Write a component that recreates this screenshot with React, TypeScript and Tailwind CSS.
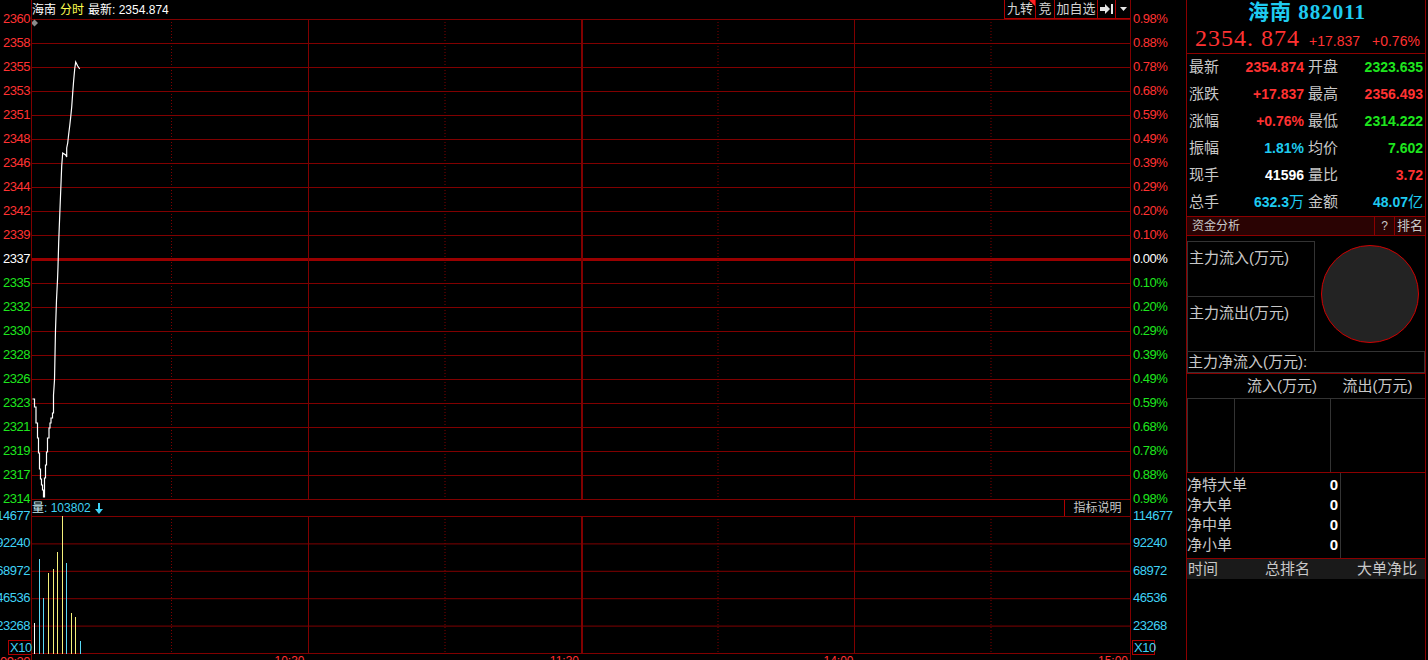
import React from "react";

const GRID = "#800000";

const upRows = [
  ["2360", "0.98%"],
  ["2358", "0.88%"],
  ["2355", "0.78%"],
  ["2353", "0.68%"],
  ["2351", "0.59%"],
  ["2348", "0.49%"],
  ["2346", "0.39%"],
  ["2344", "0.29%"],
  ["2342", "0.20%"],
  ["2339", "0.10%"],
];
const downRows = [
  ["2335", "0.10%"],
  ["2332", "0.20%"],
  ["2330", "0.29%"],
  ["2328", "0.39%"],
  ["2326", "0.49%"],
  ["2323", "0.59%"],
  ["2321", "0.68%"],
  ["2319", "0.78%"],
  ["2317", "0.88%"],
  ["2314", "0.98%"],
];

interface AxisRow {
  price: string;
  pct: string;
  tone: string;
}

const axisRows: AxisRow[] = [
  ...upRows.map(([price, pct]) => ({ price, pct, tone: "text-[#ff3232]" })),
  { price: "2337", pct: "0.00%", tone: "text-white" },
  ...downRows.map(([price, pct]) => ({ price, pct, tone: "text-[#1ee61e]" })),
];

const volLabels = ["114677", "92240", "68972", "46536", "23268"];

// global pixel coords of the minute line, shifted into the chart svg below
const pricePts: [number, number][] = [
  [32.5, 399], [34.5, 399], [34.5, 407], [36, 407], [36, 423], [37.5, 423],
  [37.5, 438], [38.5, 438], [38.5, 453], [39.5, 453], [39.5, 469], [40.5, 469],
  [40.5, 479], [41.5, 479], [41.5, 485], [42.5, 485], [42.5, 490], [43.5, 490],
  [43.5, 497], [44.5, 497], [44.5, 478], [45.5, 478], [45.5, 465], [46.5, 465],
  [46.5, 452], [47.5, 452], [47.5, 438], [49, 438], [49, 428], [50, 428],
  [50, 423], [51, 423], [51, 418], [52.5, 418], [52.5, 413], [53.5, 413],
  [53.5, 395], [54.5, 380], [55.5, 330], [56.5, 300], [57.5, 280], [58, 267],
  [58.7, 242], [59.7, 216], [60.7, 191], [61.7, 166], [62.7, 153], [65.7, 155],
  [66.7, 157], [66.7, 148], [67.7, 143], [68.7, 134], [69.7, 126], [70.7, 117],
  [71.7, 107], [72.7, 93], [73.7, 80], [74.7, 69], [75.7, 62], [76.7, 64],
  [77.7, 66], [79.7, 69],
];

const volBars: [number, number, string][] = [
  [2.5, 107, "#ffffff"],
  [7.5, 43, "#5ad8f5"],
  [11.5, 82, "#5ad8f5"],
  [16.5, 57, "#f4f07a"],
  [21.5, 53, "#f4f07a"],
  [25.5, 36, "#f4f07a"],
  [30.5, 0, "#f4f07a"],
  [34.5, 47, "#5ad8f5"],
  [39.5, 97, "#f4f07a"],
  [43.5, 101, "#f4f07a"],
  [48.5, 125, "#5ad8f5"],
];

const dotted = [139.5, 413, 686, 959];
const solid = [276.5, 822.5];

function VerticalGrid({ height }: { height: number }) {
  return (
    <>
      {dotted.map((x) => (
        <line key={x} x1={x} x2={x} y1={0} y2={height} stroke={GRID} strokeDasharray="1 2" />
      ))}
      {solid.map((x) => (
        <line key={x} x1={x} x2={x} y1={0} y2={height} stroke={GRID} />
      ))}
      <rect x={549} y={0} width={2} height={height} fill={GRID} />
    </>
  );
}

function PriceChart() {
  return (
    <svg width={1098} height={481} className="block shrink-0">
      {Array.from({ length: 21 }).map((_, i) =>
        i === 10 ? null : (
          <line key={i} x1={0} x2={1098} y1={i * 24 + 0.5} y2={i * 24 + 0.5} stroke={GRID} />
        )
      )}
      <rect x={0} y={239} width={1098} height={3} fill="#990000" />
      <VerticalGrid height={481} />
      <polygon points="2.5,0.5 6,4 2.5,7.5 -1,4" fill="#8a8a8a" />
      <polyline
        points={pricePts.map(([x, y]) => `${x - 32},${y - 19}`).join(" ")}
        fill="none"
        stroke="#ffffff"
        strokeWidth={1.2}
      />
    </svg>
  );
}

function VolumeChart() {
  return (
    <svg width={1098} height={138} className="block shrink-0">
      {[0.5, 27.9, 55.3, 82.7, 110.1, 137.5].map((y) => (
        <line key={y} x1={0} x2={1098} y1={y} y2={y} stroke={GRID} />
      ))}
      <VerticalGrid height={138} />
      {volBars.map(([x, top, c]) => (
        <line key={x} x1={x} x2={x} y1={top} y2={138} stroke={c} strokeWidth={1} />
      ))}
    </svg>
  );
}

function LeftAxis() {
  return (
    <div className="w-[32px] shrink-0 border-r border-[#800000] flex flex-col text-[13px] tracking-[-0.5px]">
      <div className="mt-[7px] flex flex-col">
        {axisRows.map((r) => (
          <div key={r.price} className={`h-[24px] flex items-center justify-end pr-[1px] ${r.tone}`}>
            {r.price}
          </div>
        ))}
      </div>
      <div className="-mt-[9px] flex flex-col text-[#3fd2f5]">
        {volLabels.map((v) => (
          <div key={v} className="h-[27.4px] flex items-center justify-end pr-[1px] whitespace-nowrap">
            {v}
          </div>
        ))}
      </div>
      <div className="mt-[1px] ml-[8px] h-[15px] border border-r-0 border-[#b00000] text-[#3fd2f5] leading-[13px] pl-[1px]">
        X10
      </div>
      <div className="flex justify-end pr-[1px] text-[#ff3232] leading-[14px]">09:30</div>
    </div>
  );
}

function RightAxis() {
  return (
    <div className="w-[56px] shrink-0 border-l border-[#800000] flex flex-col text-[13px] tracking-[-0.5px]">
      <div className="mt-[7px] flex flex-col">
        {axisRows.map((r, i) => (
          <div key={i} className={`h-[24px] flex items-center pl-[2px] ${r.tone}`}>
            {r.pct}
          </div>
        ))}
      </div>
      <div className="-mt-[9px] flex flex-col text-[#3fd2f5]">
        {volLabels.map((v) => (
          <div key={v} className="h-[27.4px] flex items-center pl-[2px] whitespace-nowrap">
            {v}
          </div>
        ))}
      </div>
      <div className="mt-[1px] ml-[1px] w-[23px] h-[15px] border border-[#b00000] text-[#3fd2f5] leading-[13px] pl-[1px]">
        X10
      </div>
    </div>
  );
}

function Toolbar() {
  return (
    <div className="ml-auto self-stretch flex border-b border-[#b00000] text-[13px] text-[#d2d2d2]">
      <div className="relative w-[31px] border-l border-[#b00000] flex items-center justify-center">
        九转
        <span className="absolute top-0 right-0 w-0 h-0 border-t-[6px] border-l-[6px] border-t-[#ff2020] border-l-transparent" />
      </div>
      <div className="w-[19px] border-l border-[#b00000] flex items-center justify-center">竞</div>
      <div className="w-[43px] border-l border-[#b00000] flex items-center justify-center">加自选</div>
      <div className="w-[18px] border-l border-[#b00000] flex items-center justify-center">
        <svg width={14} height={10} viewBox="0 0 14 10">
          <rect x={0} y={3} width={6} height={4} fill="#e6e6e6" />
          <polygon points="5,0 10,5 5,10" fill="#e6e6e6" />
          <rect x={11} y={0} width={2} height={10} fill="#e6e6e6" />
        </svg>
      </div>
      <div className="w-[15px] border-l border-[#b00000] flex items-center justify-center">
        <svg width={7} height={4} viewBox="0 0 7 4">
          <polygon points="0,0 7,0 3.5,4" fill="#e6e6e6" />
        </svg>
      </div>
    </div>
  );
}

function ChartColumn() {
  return (
    <div className="w-[1098px] shrink-0 flex flex-col">
      <div className="h-[19px] shrink-0 flex items-center text-[12px]">
        <div className="flex items-center gap-[4px]">
          <span className="text-white">海南</span>
          <span className="text-[#ffff50]">分时</span>
          <span className="text-white">最新: 2354.874</span>
        </div>
        <Toolbar />
      </div>
      <PriceChart />
      <div className="h-[16px] shrink-0 flex items-center text-[12px]">
        <span className="text-[#c8ecf5]">量</span>
        <span className="text-[#3fd2f5]">: 103802</span>
        <svg width={8} height={11} viewBox="0 0 8 11" className="ml-[4px]">
          <rect x={3} y={0} width={2} height={7} fill="#3fd2f5" />
          <polygon points="0,6 8,6 4,11" fill="#3fd2f5" />
        </svg>
        <div className="ml-auto self-stretch w-[66px] border-l border-[#b00000] flex items-center justify-center text-[#c8c8c8]">
          指标说明
        </div>
      </div>
      <VolumeChart />
      <div className="grid grid-cols-4 text-[12px] leading-[14px] text-[#ff3232]">
        <div className="text-right pr-[2px]">10:30</div>
        <div className="text-right pr-[2px]">11:30</div>
        <div className="text-right pr-[2px]">14:00</div>
        <div className="text-right pr-[2px]">15:00</div>
      </div>
    </div>
  );
}

interface Stat {
  label: string;
  value: React.ReactNode;
  tone: string;
}

const statRows: [Stat, Stat][] = [
  [
    { label: "最新", value: "2354.874", tone: "text-[#ff3232]" },
    { label: "开盘", value: "2323.635", tone: "text-[#1ee61e]" },
  ],
  [
    { label: "涨跌", value: "+17.837", tone: "text-[#ff3232]" },
    { label: "最高", value: "2356.493", tone: "text-[#ff3232]" },
  ],
  [
    { label: "涨幅", value: "+0.76%", tone: "text-[#ff3232]" },
    { label: "最低", value: "2314.222", tone: "text-[#1ee61e]" },
  ],
  [
    { label: "振幅", value: "1.81%", tone: "text-[#1ecbf0]" },
    { label: "均价", value: "7.602", tone: "text-[#1ee61e]" },
  ],
  [
    { label: "现手", value: "41596", tone: "text-white" },
    { label: "量比", value: "3.72", tone: "text-[#ff3232]" },
  ],
  [
    {
      label: "总手",
      value: (
        <>
          632.3<span className="font-normal text-[15px]">万</span>
        </>
      ),
      tone: "text-[#1ecbf0]",
    },
    {
      label: "金额",
      value: (
        <>
          48.07<span className="font-normal text-[15px]">亿</span>
        </>
      ),
      tone: "text-[#1ecbf0]",
    },
  ],
];

function SidePanel() {
  return (
    <div className="w-[242px] shrink-0">
      <div className="w-[240px] h-full border-x border-[#8b0000] flex flex-col text-[#c8c8c8]">
        <div className="h-[25px] shrink-0 flex items-center justify-center pl-[2px] text-[21px] font-bold tracking-[1px] text-[#1ecbf0] font-['Liberation_Serif','Noto_Sans_CJK_SC',serif]">
          海南 882011
        </div>
        <div className="h-[29px] shrink-0 border-b border-[#8b0000] flex items-baseline pt-[1px] text-[#ff3232]">
          <span className="ml-[8px] text-[24px] leading-none tracking-[1px] font-['Liberation_Serif',serif]">
            2354. 874
          </span>
          <span className="ml-[9px] text-[14px]">+17.837</span>
          <span className="ml-[12px] text-[14px]">+0.76%</span>
        </div>
        <div className="flex flex-col">
          {statRows.map(([a, b]) => (
            <div key={a.label} className="h-[27px] grid grid-cols-[118px_120px]">
              <div className="flex items-center justify-between pl-[2px] pr-[1px]">
                <span className="text-[15px]">{a.label}</span>
                <span className={`text-[14px] font-bold ${a.tone}`}>{a.value}</span>
              </div>
              <div className="flex items-center justify-between pl-[3px] pr-[2px]">
                <span className="text-[15px]">{b.label}</span>
                <span className={`text-[14px] font-bold ${b.tone}`}>{b.value}</span>
              </div>
            </div>
          ))}
        </div>
        <div className="h-[20px] shrink-0 flex border-y border-[#8b0000] bg-[#2a0303] text-[12px]">
          <div className="flex-1 flex items-center pl-[5px]">资金分析</div>
          <div className="w-[20px] border-l border-[#8b0000] flex items-center justify-center">?</div>
          <div className="w-[31px] border-l border-[#8b0000] flex items-center justify-center text-[13px]">
            排名
          </div>
        </div>
        <div className="h-[115px] shrink-0 flex text-[15px]">
          <div className="w-[128px] pt-[5px] flex flex-col">
            <div className="h-[55px] border-t border-x border-[#333] pt-[5px] pl-[1px]">主力流入(万元)</div>
            <div className="h-[55px] border-t border-x border-[#333] pt-[5px] pl-[1px]">主力流出(万元)</div>
          </div>
          <div className="flex-1 flex items-center justify-center">
            <div className="w-[98px] h-[98px] rounded-full bg-[#232323] border border-[#d00000]" />
          </div>
        </div>
        <div className="h-[22px] shrink-0 border border-[#333] flex items-center text-[15px]">
          主力净流入(万元):
        </div>
        <div className="h-[25px] shrink-0 border-t border-[#8b0000] grid grid-cols-[47px_96px_95px] text-[15px]">
          <div />
          <div className="flex items-center justify-center">流入(万元)</div>
          <div className="flex items-center justify-center">流出(万元)</div>
        </div>
        <div className="h-[74px] shrink-0 border-t border-[#333] grid grid-cols-[47px_96px_95px]">
          <div className="border-l border-[#333]" />
          <div className="border-l border-[#333]" />
          <div className="border-l border-[#333]" />
        </div>
        <div className="h-[86px] shrink-0 border-t border-[#8b0000] flex">
          <div className="w-[154px] border-r border-[#333] pt-[2px] flex flex-col text-[15px]">
            {["净特大单", "净大单", "净中单", "净小单"].map((t) => (
              <div key={t} className="h-[20px] flex items-center justify-between pr-[2px]">
                <span>{t}</span>
                <span className="font-bold text-white">0</span>
              </div>
            ))}
          </div>
        </div>
        <div className="h-[21px] shrink-0 border-t border-[#8b0000] bg-[#1a1a1a] flex items-center justify-between pl-[1px] pr-[8px] text-[15px]">
          <span>时间</span>
          <span>总排名</span>
          <span>大单净比</span>
        </div>
      </div>
    </div>
  );
}

export default function App() {
  return (
    <div className="w-[1428px] h-[660px] overflow-hidden bg-black flex font-['Liberation_Sans','Noto_Sans_CJK_SC',sans-serif]">
      <LeftAxis />
      <ChartColumn />
      <RightAxis />
      <SidePanel />
    </div>
  );
}
